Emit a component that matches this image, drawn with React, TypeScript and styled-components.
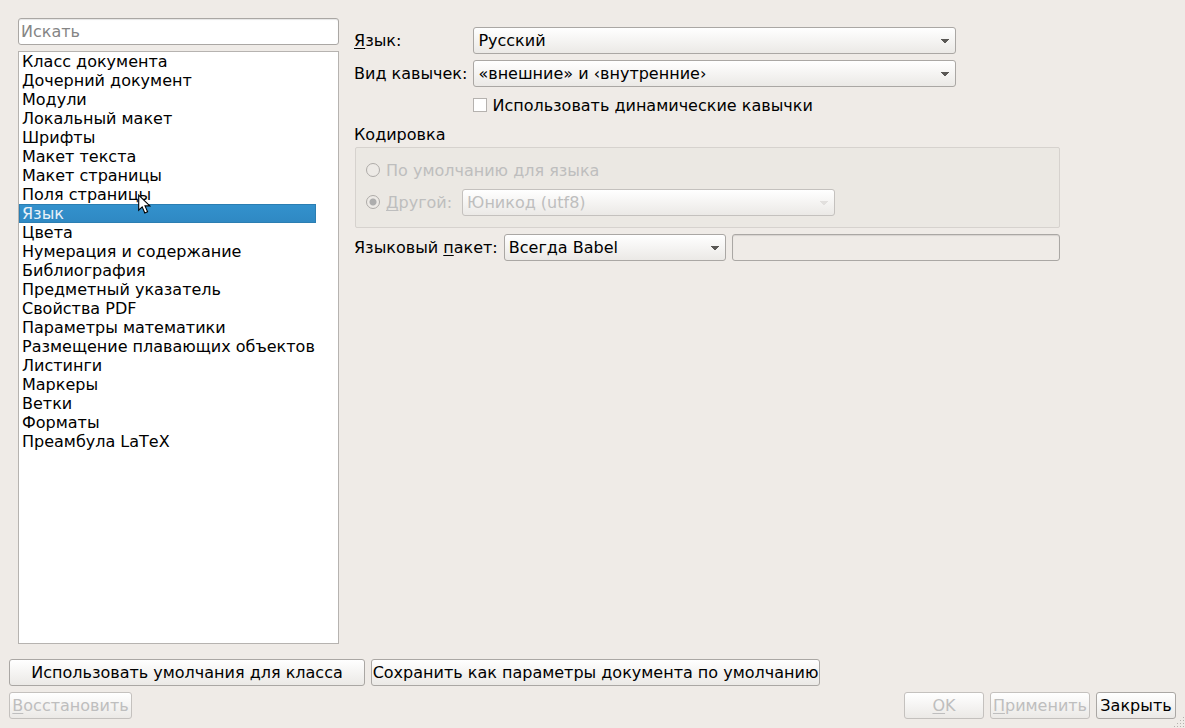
import React, { useState } from "react";
import styled, { createGlobalStyle, css } from "styled-components";

const color = {
  window: "#efebe7",
  base: "#ffffff",
  border: "#aaa7a4",
  borderDisabled: "#c4c1be",
  text: "#000000",
  textDisabled: "#bebebe",
};

const GlobalStyle = createGlobalStyle`
  * { box-sizing: border-box; }
  body {
    margin: 0;
    background: ${color.window};
    color: ${color.text};
    font: 16px/19px "DejaVu Sans", sans-serif;
    font-kerning: none;
  }
  button, input, select { font: inherit; font-kerning: none; color: inherit; margin: 0; }
`;

const Dialog = styled.form`
  position: relative;
  display: flex;
  flex-direction: column;
  gap: 6px;
  min-height: 100vh;
  padding: 9px;
`;

const Content = styled.div`
  flex: 1;
  display: flex;
  gap: 15px;
  padding: 9px;
`;

const Sidebar = styled.nav`
  flex: 0 0 321px;
  display: flex;
  flex-direction: column;
  gap: 6px;
`;

const TextField = styled.input`
  height: 27px;
  min-width: 0;
  padding: 0 2px;
  border: 1px solid ${color.border};
  border-radius: 3px;
  background: ${color.base};
  box-shadow: inset 0 1px 1px #0000001a;
  outline: none;
  &::placeholder { color: #858585; opacity: 1; }
  &:disabled { background: ${color.window}; }
`;

const ListFrame = styled.div`
  position: relative;
  flex: 1;
  border: 1px solid #b6b3b0;
  background: ${color.base};
`;

const List = styled.ul`
  width: 297px;
  margin: 0;
  padding: 0;
  list-style: none;
`;

const ListItem = styled.button<{ $selected: boolean }>`
  display: block;
  width: 100%;
  height: 19px;
  padding: 0 2px;
  border: 1px solid transparent;
  background: transparent;
  line-height: 17px;
  text-align: left;
  white-space: nowrap;
  outline: none;
  ${(p) =>
    p.$selected &&
    css`
      border-color: #2b7eb2;
      background: linear-gradient(#3391cd, #2f89c3);
      background-clip: padding-box;
      color: #e8f1f8;
    `}
`;

const Pointer = styled.svg`
  position: absolute;
  left: 119px;
  top: 142px;
  pointer-events: none;
`;

const Panel = styled.section`
  flex: 0 1 706px;
  display: flex;
  flex-direction: column;
  padding-top: 9px;
`;

const Fields = styled.div`
  display: grid;
  grid-template-columns: auto 1fr;
  align-items: center;
  gap: 6px;
  width: 602px;
  max-width: 100%;
`;

const Mnemonic = styled.span`
  text-decoration: underline 1px;
  text-underline-offset: 2px;
  text-decoration-skip-ink: none;
`;

const SelectBox = styled.span<{ $width?: number }>`
  position: relative;
  display: flex;
  width: ${(p) => (p.$width ? `${p.$width}px` : "auto")};
`;

const SelectControl = styled.select`
  appearance: none;
  flex: 1;
  min-width: 0;
  height: 27px;
  padding: 0 24px 0 4px;
  border: 1px solid ${color.border};
  border-radius: 3px;
  background: linear-gradient(#ffffff, #ebe9e6);
  outline: none;
  &:disabled {
    border-color: ${color.borderDisabled};
    color: ${color.textDisabled};
    opacity: 1;
  }
`;

const Arrow = styled.svg`
  position: absolute;
  right: 7px;
  top: 12px;
  pointer-events: none;
`;

const CheckLabel = styled.label`
  grid-column: 2;
  display: flex;
  align-items: center;
  gap: 5px;
  height: 25px;
`;

const Indicator = styled.input`
  && { margin-bottom: 1px; }
  appearance: none;
  width: 14px;
  height: 14px;
`;

const CheckBox = styled(Indicator)`
  border: 1px solid #b5b2af;
  background: ${color.base};
  &:checked { box-shadow: inset 0 0 0 3px ${color.base}; background: #5a5a5a; }
`;

const Group = styled.fieldset`
  min-width: 0;
  margin: 0;
  padding: 0;
  border: 0;
`;

const GroupTitle = styled.legend`
  height: 29px;
  padding: 7px 0 0;
`;

const GroupBody = styled.div`
  display: flex;
  flex-direction: column;
  gap: 5px;
  height: 81px;
  margin-left: 1px;
  padding: 9px 10px;
  border: 1px solid #d6d2ce;
  border-radius: 2px;
  background: #ebe8e3;
  color: ${color.textDisabled};
`;

const RadioRow = styled.div`
  display: flex;
  align-items: center;
  gap: 10px;
  height: 27px;
`;

const RadioLabel = styled.label`
  display: flex;
  align-items: center;
  gap: 6px;
`;

const Radio = styled(Indicator)`
  border: 1px solid #aeaba8;
  border-radius: 50%;
  background: #edeae6;
  &:checked { background: radial-gradient(circle, #adadad 3px, #edeae6 4px); }
`;

const PackageRow = styled.div`
  display: flex;
  align-items: center;
  gap: 6px;
  margin-top: 6px;
  white-space: nowrap;
  ${TextField} { flex: 1; }
`;

const ButtonRow = styled.div`
  display: flex;
  gap: 6px;
`;

const Button = styled.button<{ $width?: number; $push?: boolean }>`
  width: ${(p) => p.$width ?? 80}px;
  height: 27px;
  margin-left: ${(p) => (p.$push ? "auto" : "0")};
  padding: 0;
  border: 1px solid ${color.border};
  border-radius: 3px;
  background: linear-gradient(#ffffff, #ebe9e6);
  white-space: nowrap;
  &:disabled { border-color: ${color.borderDisabled}; color: ${color.textDisabled}; }
`;

const Grip = styled.svg`
  position: absolute;
  right: 1px;
  bottom: 1px;
`;

const sections = [
  "Класс документа",
  "Дочерний документ",
  "Модули",
  "Локальный макет",
  "Шрифты",
  "Макет текста",
  "Макет страницы",
  "Поля страницы",
  "Язык",
  "Цвета",
  "Нумерация и содержание",
  "Библиография",
  "Предметный указатель",
  "Свойства PDF",
  "Параметры математики",
  "Размещение плавающих объектов",
  "Листинги",
  "Маркеры",
  "Ветки",
  "Форматы",
  "Преамбула LaTeX",
];

const gripDots = [
  [9, 0],
  [6, 3], [9, 3],
  [3, 6], [6, 6], [9, 6],
  [0, 9], [3, 9], [6, 9], [9, 9],
];

interface DropDownProps {
  id: string;
  value: string;
  width?: number;
  disabled?: boolean;
  label?: string;
}

function DropDown({ id, value, width, disabled, label }: DropDownProps) {
  return (
    <SelectBox $width={width}>
      <SelectControl id={id} disabled={disabled} aria-label={label}>
        <option>{value}</option>
      </SelectControl>
      <Arrow width="8" height="4" viewBox="0 0 8 4" shapeRendering="crispEdges" aria-hidden="true">
        <path d="M0 0H8V1H7V2H6V3H5V4H3V3H2V2H1V1H0Z" fill={disabled ? "#e2e0de" : "#5a5855"} />
      </Arrow>
    </SelectBox>
  );
}

export default function App() {
  const [selected, setSelected] = useState("Язык");
  const [dynamic, setDynamic] = useState(false);

  return (
    <>
      <GlobalStyle />
      <Dialog onSubmit={(e: React.FormEvent) => e.preventDefault()}>
        <Content>
          <Sidebar>
            <TextField type="text" placeholder="Искать" aria-label="Искать" />
            <ListFrame>
              <List>
                {sections.map((name) => (
                  <li key={name}>
                    <ListItem
                      type="button"
                      $selected={name === selected}
                      aria-pressed={name === selected}
                      onClick={() => setSelected(name)}
                    >
                      {name}
                    </ListItem>
                  </li>
                ))}
              </List>
              <Pointer width="13" height="21" viewBox="0 0 13 21" aria-hidden="true">
                <path
                  d="M0.7 1.2V16.2L4.2 12.9L6.8 19L9.6 17.8L7 11.9H11.8Z"
                  fill="#fff"
                  stroke="#000"
                  strokeWidth="1.1"
                />
              </Pointer>
            </ListFrame>
          </Sidebar>

          <Panel>
            <Fields>
              <label htmlFor="language">
                <Mnemonic>Я</Mnemonic>зык:
              </label>
              <DropDown id="language" value="Русский" />
              <label htmlFor="quotes">Вид кавычек:</label>
              <DropDown id="quotes" value="«внешние» и ‹внутренние›" />
              <CheckLabel>
                <CheckBox type="checkbox" checked={dynamic} onChange={() => setDynamic(!dynamic)} />
                Использовать динамические кавычки
              </CheckLabel>
            </Fields>

            <Group disabled>
              <GroupTitle>Кодировка</GroupTitle>
              <GroupBody>
                <RadioRow>
                  <RadioLabel>
                    <Radio type="radio" name="encoding" />
                    По умолчанию для языка
                  </RadioLabel>
                </RadioRow>
                <RadioRow>
                  <RadioLabel>
                    <Radio type="radio" name="encoding" defaultChecked />
                    <span>
                      <Mnemonic>Д</Mnemonic>ругой:
                    </span>
                  </RadioLabel>
                  <DropDown id="encoding" value="Юникод (utf8)" width={373} disabled label="Кодировка" />
                </RadioRow>
              </GroupBody>
            </Group>

            <PackageRow>
              <label htmlFor="package">
                Языковый <Mnemonic>п</Mnemonic>акет:
              </label>
              <DropDown id="package" value="Всегда Babel" width={222} />
              <TextField type="text" disabled aria-label="Языковый пакет" />
            </PackageRow>
          </Panel>
        </Content>

        <ButtonRow>
          <Button type="button" $width={356}>Использовать умолчания для класса</Button>
          <Button type="button" $width={449}>Сохранить как параметры документа по умолчанию</Button>
        </ButtonRow>
        <ButtonRow>
          <Button type="button" $width={123} disabled>
            <Mnemonic>В</Mnemonic>осстановить
          </Button>
          <Button type="submit" disabled $push>
            <Mnemonic>O</Mnemonic>K
          </Button>
          <Button type="button" $width={100} disabled>
            <Mnemonic>П</Mnemonic>рименить
          </Button>
          <Button type="button">Закрыть</Button>
        </ButtonRow>

        <Grip width="10" height="10" viewBox="0 0 10 10" shapeRendering="crispEdges" aria-hidden="true">
          {gripDots.map(([x, y]) => (
            <rect key={`${x}-${y}`} x={x} y={y} width="1" height="1" fill="#b5b2ae" />
          ))}
        </Grip>
      </Dialog>
    </>
  );
}
